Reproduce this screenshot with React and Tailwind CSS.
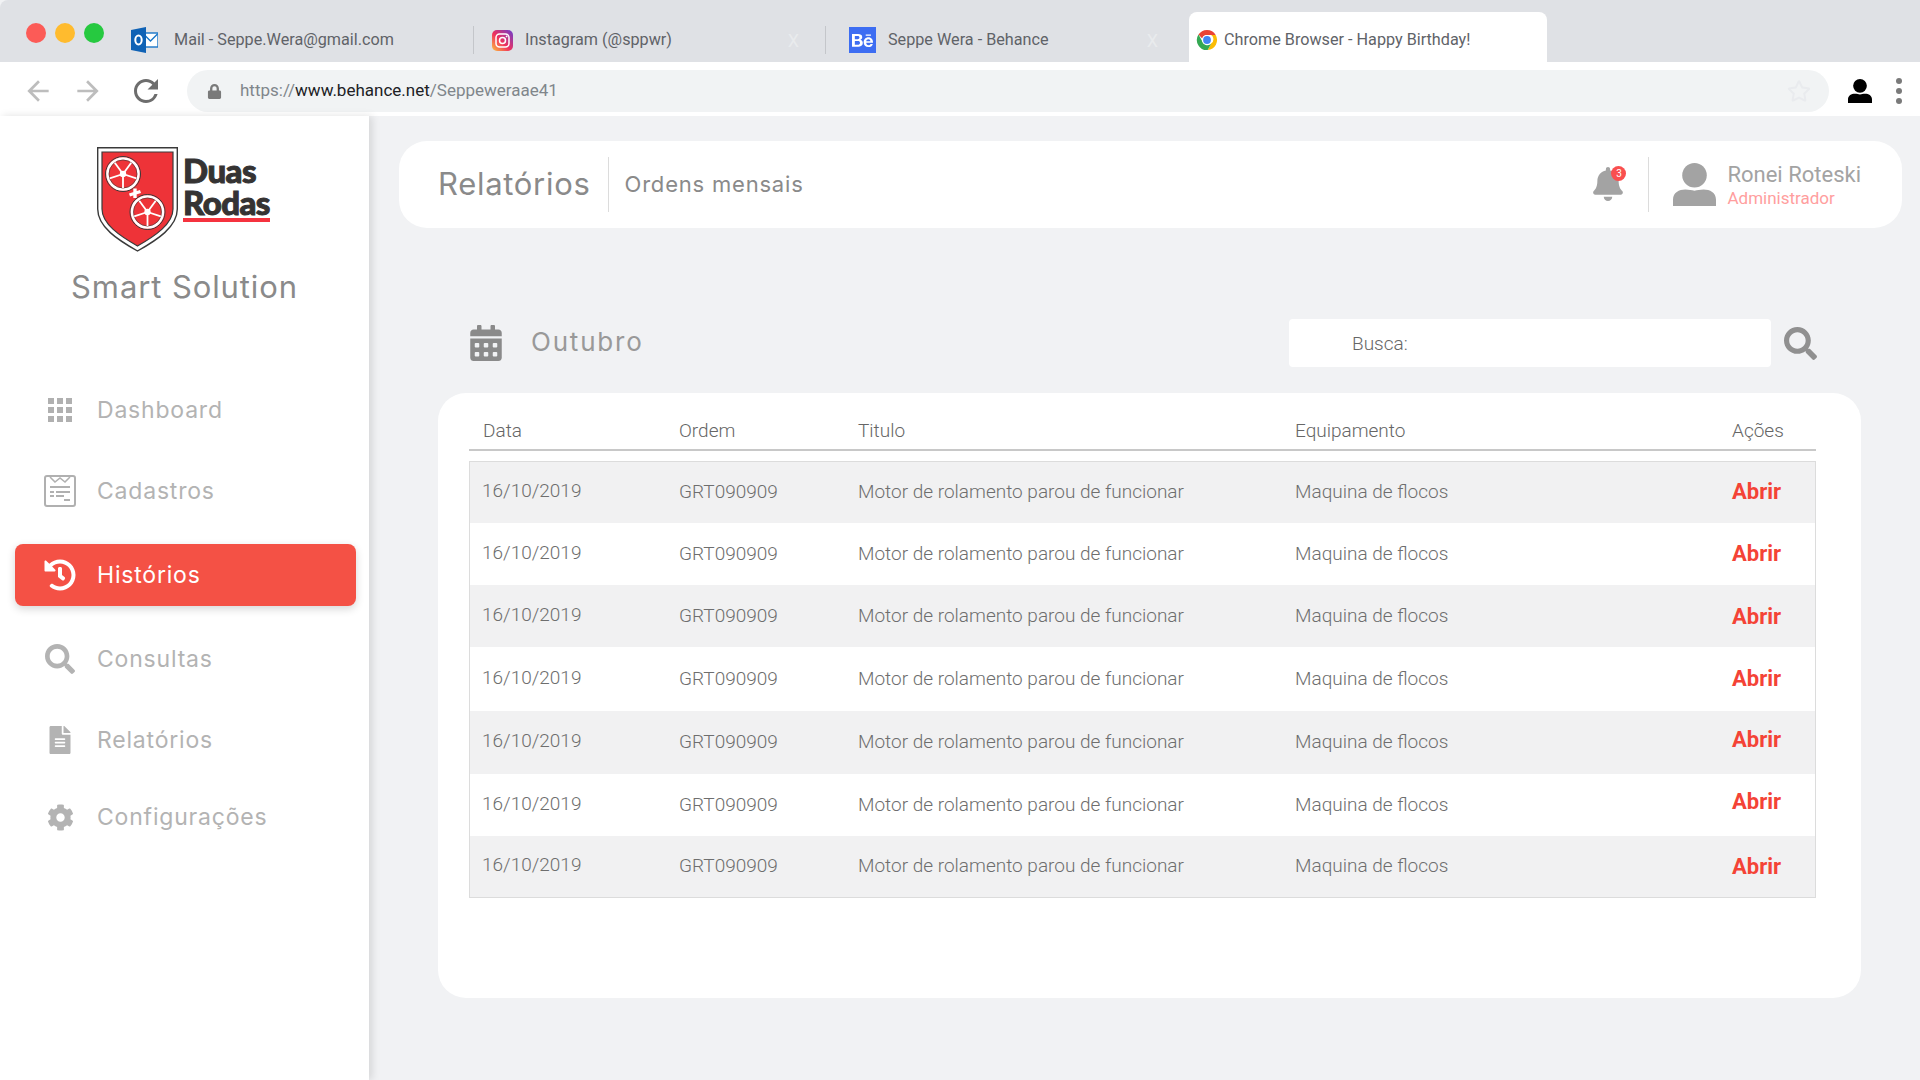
import React from 'react';
import { FaHistory, FaSearch, FaFileAlt, FaCog, FaCalendarAlt, FaBell, FaBehance, FaLock, FaRegStar } from 'react-icons/fa';
import { MdArrowBack, MdArrowForward, MdRefresh } from 'react-icons/md';

const rowHeights = ['h-[61px]', 'h-[62px]', 'h-[62px]', 'h-[64px]', 'h-[63px]', 'h-[62px]', 'h-[61px]'];
const abrirNudge = ['pb-[2px]', 'pb-[2px]', '', 'pb-[2px]', 'pb-[7px]', 'pb-[7px]', ''];

function Wheel({ cx, cy }) {
  return (
    <g transform={`translate(${cx} ${cy})`} stroke="#fff" fill="none">
      <circle r="17.5" strokeWidth="1" stroke="#3a3a3a" fill="#ee3338" />
      <circle r="15.5" strokeWidth="2.6" />
      <circle r="14" strokeWidth="0.6" stroke="#3a3a3a" />
      {[180, 252, 324, 36, 108].map((a) => (
        <line key={a} x1="0" y1="0" x2="0" y2="-14" strokeWidth="1.8" transform={`rotate(${a})`} />
      ))}
      <circle r="3.2" fill="#fff" stroke="none" />
    </g>
  );
}

function Logo() {
  return (
    <div className="flex items-start ml-[97px] mt-[31px]">
      <svg width="81" height="105" viewBox="0 0 81 105" className="shrink-0">
        <path d="M0.7 0.7H80.3V62C80.3 80 60 93 40.5 104C21 93 0.7 80 0.7 62Z" fill="#fff" stroke="#3a3a3a" strokeWidth="1.4" />
        <path d="M5 5H76V62C76 77 58 89 40.5 99C23 89 5 77 5 62Z" fill="#ee3338" stroke="#3a3a3a" strokeWidth="1.2" />
        <Wheel cx="26" cy="27" />
        <Wheel cx="50.5" cy="65" />
        <path d="M38 41.5v9.5M32.5 48l11-3.5" stroke="#fff" strokeWidth="3.4" />
      </svg>
      <div className="ml-[5px] mt-[7px] w-[90px] font-['Lato'] font-black text-[#353333] text-[33px] leading-[33px] tracking-[-0.5px] [-webkit-text-stroke:1px_#353333]">
        <div>Duas</div>
        <div className="border-b-4 border-[#f5333f] w-[87px] whitespace-nowrap tracking-[-0.6px] leading-[31px]">Rodas</div>
      </div>
    </div>
  );
}

function GridIcon() {
  return (
    <svg width="24" height="24" viewBox="0 0 24 24" fill="#b0b0b0">
      {[0, 9, 18].map((y) => [0, 9, 18].map((x) => <rect key={`${x}-${y}`} x={x} y={y} width="6" height="6" />))}
    </svg>
  );
}

function FormIcon() {
  return (
    <svg width="32" height="32" viewBox="0 0 32 32" fill="none" stroke="#b0b0b0">
      <rect x="1" y="1" width="30" height="30" rx="2" strokeWidth="2" />
      <path d="M6 2l5 5 5-4 5 4 5-5" strokeWidth="1.6" />
      <path d="M6 12h20M6 17h4M12 17h14M6 21h4M12 21h8M20 25h6" strokeWidth="2" />
    </svg>
  );
}

function UserIcon({ className, fill }) {
  return (
    <svg viewBox="0 0 42 42" className={className} fill={fill}>
      <circle cx="21" cy="12" r="12" />
      <path d="M0 36C0 29 6 26 12 26C16 26 18 27 21 27C24 27 26 26 30 26C36 26 42 29 42 36V42H0Z" />
    </svg>
  );
}

function OutlookIcon() {
  return (
    <svg width="27" height="26" viewBox="0 0 27 26" className="shrink-0">
      <rect x="12" y="6" width="15" height="14" fill="#fff" stroke="#1976c8" strokeWidth="1.4" />
      <path d="M12.5 7l7 7 7-7" fill="none" stroke="#1976c8" strokeWidth="1.4" />
      <path d="M0 3L15 0V26L0 23Z" fill="#0f62b5" />
      <ellipse cx="7.5" cy="13" rx="3.2" ry="4.4" fill="none" stroke="#fff" strokeWidth="2" />
    </svg>
  );
}

function InstagramIcon() {
  return (
    <svg width="21" height="21" viewBox="0 0 21 21" className="shrink-0">
      <defs>
        <linearGradient id="ig" x1="0" y1="1" x2="1" y2="0">
          <stop offset="0" stopColor="#fdc13f" />
          <stop offset="0.45" stopColor="#f0305c" />
          <stop offset="1" stopColor="#6a3fd0" />
        </linearGradient>
      </defs>
      <rect width="21" height="21" rx="5" fill="url(#ig)" />
      <rect x="4" y="4" width="13" height="13" rx="3.5" fill="none" stroke="#fff" strokeWidth="1.5" />
      <circle cx="10.5" cy="10.5" r="3" fill="none" stroke="#fff" strokeWidth="1.5" />
      <circle cx="14.6" cy="6.4" r="0.9" fill="#fff" />
    </svg>
  );
}

function ChromeIcon() {
  return (
    <svg width="22" height="22" viewBox="0 0 48 48" className="shrink-0">
      <path d="M24 2a22 22 0 0 1 19 11H24a11 11 0 0 0-10.5 7.8L5.4 12.2A22 22 0 0 1 24 2z" fill="#ea4335" />
      <path d="M43 13A22 22 0 0 1 25.5 46L33.5 31a11 11 0 0 0-.3-18z" fill="#fbbc05" />
      <path d="M5.4 12.2A22 22 0 0 0 25.5 46L33.5 31a11 11 0 0 1-19.3-3z" fill="#34a853" />
      <circle cx="24" cy="24" r="11" fill="#fff" />
      <circle cx="24" cy="24" r="8.5" fill="#4285f4" />
    </svg>
  );
}

function Tab({ icon, label, width, closeGap, last }) {
  return (
    <div className={`flex items-center h-[28px] ${width} ${last ? '' : 'border-r border-[#c4c6ca]'}`}>
      {icon}
      <span className="whitespace-nowrap text-[16.2px] text-[#5f6368]">{label}</span>
      {closeGap && <span className={`ml-auto text-[18px] text-[#e9ebed] ${closeGap}`}>X</span>}
    </div>
  );
}

function NavItem({ icon, label, active, className }) {
  return (
    <a
      href="#"
      className={`flex items-center mx-[15px] w-[341px] h-[62px] rounded-lg ${className} ${
        active ? 'bg-[#f45145] text-white shadow-[0_3px_8px_rgba(0,0,0,0.16)]' : 'text-[#b3b3b3]'
      }`}
    >
      <span className="w-[32px] ml-[29px] flex justify-center shrink-0">{icon}</span>
      <span className="ml-[21px] font-['Inter'] font-normal text-[23px] tracking-[0.8px]">{label}</span>
    </a>
  );
}

export default function App() {
  return (
    <div className="w-[1920px] h-[1080px] flex flex-col overflow-hidden bg-[#f1f2f4] font-['Roboto',sans-serif]">
      {/* Browser tabs */}
      <div className="h-[62px] shrink-0 bg-[#dfe1e5] rounded-tl-lg flex items-end">
        <div className="w-[131px] h-[62px] pl-[26px] flex items-center gap-[9px] pt-[4px]">
          <span className="w-[20px] h-[20px] rounded-full bg-[#fc5b57]" />
          <span className="w-[20px] h-[20px] rounded-full bg-[#ffbb2e]" />
          <span className="w-[20px] h-[20px] rounded-full bg-[#26c940]" />
        </div>
        <div className="h-[62px] flex items-center pt-[18px]">
          <Tab icon={<span className="mr-[16px]"><OutlookIcon /></span>} label="Mail - Seppe.Wera@gmail.com" width="w-[343px]" />
          <Tab icon={<span className="ml-[18px] mr-[12px]"><InstagramIcon /></span>} label="Instagram (@sppwr)" width="w-[352px]" closeGap="mr-[26px]" />
          <Tab
            icon={
              <span className="ml-[23px] mr-[12px] w-[27px] h-[26px] bg-[#3d6df2] flex items-center justify-center text-white">
                <FaBehance size={21} />
              </span>
            }
            label="Seppe Wera - Behance"
            width="w-[363px]"
            closeGap="mr-[31px]"
            last
          />
        </div>
        <div className="w-[358px] h-[50px] bg-white rounded-t-lg flex items-center pl-[7px] pt-[6px]">
          <ChromeIcon />
          <span className="ml-[6px] whitespace-nowrap text-[16.2px] text-[#5f6368]">Chrome Browser - Happy Birthday!</span>
        </div>
      </div>

      {/* Address bar */}
      <div className="h-[54px] shrink-0 bg-white flex items-center pt-[4px]">
        <MdArrowBack size={32} className="ml-[22px] text-[#bdbdbd]" />
        <MdArrowForward size={32} className="ml-[18px] text-[#bdbdbd]" />
        <MdRefresh size={36} className="ml-[24px] text-[#6d6d6d]" />
        <div className="ml-[23px] w-[1642px] h-[42px] rounded-full bg-[#f1f3f4] flex items-center">
          <FaLock size={15} className="ml-[20px] text-[#7a7a7a]" />
          <span className="ml-[18px] text-[17px] text-[#80868b]">
            https://<span className="text-[#202124]">www.behance.net</span>/Seppeweraae41
          </span>
          <FaRegStar size={24} className="ml-auto mr-[18px] text-[#e9ebee]" />
        </div>
        <UserIcon className="ml-[19px] w-[24px] h-[24px]" fill="#000" />
        <div className="ml-[24px] flex flex-col gap-[4px]">
          <span className="w-[6px] h-[6px] rounded-full bg-[#7a7a7a]" />
          <span className="w-[6px] h-[6px] rounded-full bg-[#7a7a7a]" />
          <span className="w-[6px] h-[6px] rounded-full bg-[#7a7a7a]" />
        </div>
      </div>

      <div className="flex-1 flex min-h-0">
        {/* Sidebar */}
        <aside className="w-[369px] shrink-0 bg-white shadow-[3px_0_8px_rgba(0,0,0,0.12)] z-10">
          <Logo />
          <div className="mt-[17px] text-center font-['Inter'] text-[31px] leading-[36px] tracking-[0.9px] text-[#8a8a8a]">Smart Solution</div>
          <nav className="mt-[74px]">
            <NavItem icon={<GridIcon />} label="Dashboard" />
            <NavItem icon={<FormIcon />} label="Cadastros" className="mt-[19px]" />
            <NavItem icon={<FaHistory size={32} />} label="Histórios" active className="mt-[22px]" />
            <NavItem icon={<FaSearch size={30} />} label="Consultas" className="mt-[22px]" />
            <NavItem icon={<FaFileAlt size={28} />} label="Relatórios" className="mt-[19px]" />
            <NavItem icon={<FaCog size={27} />} label="Configurações" className="mt-[15px]" />
          </nav>
        </aside>

        {/* Main */}
        <main className="flex-1 pl-[30px] pr-[18px] pt-[25px]">
          <header className="h-[87px] rounded-[28px] bg-white flex items-center">
            <h1 className="ml-[39px] font-['Inter'] font-normal text-[31px] tracking-[0.7px] text-[#8a8a8a]">Relatórios</h1>
            <span className="ml-[17px] w-px h-[55px] bg-[#dcdcdc]" />
            <span className="ml-[16px] font-['Inter'] text-[22px] tracking-[0.8px] text-[#8a8a8a]">Ordens mensais</span>
            <div className="ml-auto relative w-[32px] h-[36px]">
              <FaBell size={34} className="text-[#a3a3a3]" />
              <span className="absolute -top-[1px] -right-[3px] w-[15px] h-[15px] rounded-full bg-[#f94f4f] text-white text-[10px] leading-[15px] text-center">3</span>
            </div>
            <span className="ml-[25px] w-px h-[55px] bg-[#dcdcdc]" />
            <UserIcon className="ml-[24px] w-[43px] h-[43px]" fill="#a3a3a3" />
            <div className="ml-[11px] mr-[41px]">
              <div className="text-[22px] leading-[26px] text-[#a3a3a3]">Ronei Roteski</div>
              <div className="text-[17px] leading-[20px] text-[#ff9e9e]">Administrador</div>
            </div>
          </header>

          <div className="mt-[91px] h-[48px] flex items-center">
            <FaCalendarAlt size={36} className="ml-[69px] text-[#8a8a8a]" />
            <span className="ml-[27px] pb-[3px] font-['Inter'] text-[26px] tracking-[1.8px] text-[#999999]">Outubro</span>
            <div className="ml-auto w-[482px] h-[48px] rounded bg-white flex items-center pl-[63px] pt-[2px] text-[19px] font-light text-[#666666]">Busca:</div>
            <FaSearch size={33} className="ml-[13px] mr-[85px] text-[#909090]" />
          </div>

          <section className="mt-[26px] ml-[39px] mr-[41px] h-[605px] rounded-[28px] bg-white pl-[31px] pr-[45px]">
            <div className="h-[58px] pt-[21px] border-b-2 border-[#c8c8c8] grid grid-cols-[210px_179px_437px_437px_1fr] items-center text-[19px] font-light text-[#666666]">
              <span className="pl-[14px]">Data</span>
              <span>Ordem</span>
              <span>Titulo</span>
              <span>Equipamento</span>
              <span>Ações</span>
            </div>
            <div className="mt-[10px] border border-[#dcdcdc]">
              {rowHeights.map((h, i) => (
                <div
                  key={i}
                  className={`${h} grid grid-cols-[210px_179px_437px_437px_1fr] items-center text-[19px] font-light text-[#6e6e6e] ${
                    i % 2 === 0 ? 'bg-[#f1f1f2]' : 'bg-white'
                  }`}
                >
                  <span className="pl-[12px] pb-[2px]">16/10/2019</span>
                  <span className="-ml-px">GRT090909</span>
                  <span className="-ml-px">Motor de rolamento parou de funcionar</span>
                  <span className="-ml-px">Maquina de flocos</span>
                  <span className={`-ml-px text-[22px] font-bold text-[#f44336] ${abrirNudge[i]}`}>Abrir</span>
                </div>
              ))}
            </div>
          </section>
        </main>
      </div>
    </div>
  );
}
